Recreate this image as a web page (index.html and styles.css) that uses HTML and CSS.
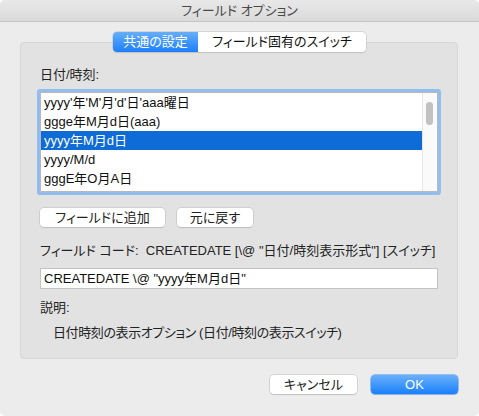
FILE: index.html
```html
<!DOCTYPE html>
<html lang="ja">
<head>
<meta charset="utf-8">
<title>フィールド オプション</title>
<link rel="stylesheet" href="styles.css">
</head>
<body>
<div class="window">
  <div class="titlebar">フィールド オプション</div>
  <div class="content">
    <div class="tabs">
      <div class="tab tab-active">共通の設定</div>
      <div class="tab tab-other">フィールド固有のスイッチ</div>
    </div>
    <div class="group">
      <div class="label">日付/時刻:</div>
      <div class="listbox">
        <div class="rows">
          <div class="row">yyyy'年'M'月'd'日'aaa曜日</div>
          <div class="row">ggge年M月d日(aaa)</div>
          <div class="row row-selected">yyyy年M月d日</div>
          <div class="row">yyyy/M/d</div>
          <div class="row">gggE年O月A日</div>
          <div class="row">yyyy年M月</div>
        </div>
        <div class="scrollbar"><div class="thumb"></div></div>
      </div>
      <div class="btn-row">
        <div class="btn btn-add">フィールドに追加</div>
        <div class="btn btn-reset">元に戻す</div>
      </div>
      <div class="codeline">フィールド コード:&nbsp;&nbsp;CREATEDATE [\@ "日付/時刻表示形式"] [スイッチ]</div>
      <div class="textfield">CREATEDATE \@ "yyyy年M月d日"</div>
      <div class="label desc-label">説明:</div>
      <div class="desc">日付時刻の表示オプション (日付/時刻の表示スイッチ)</div>
    </div>
    <div class="footer">
      <div class="btn btn-foot">キャンセル</div>
      <div class="btn btn-foot btn-ok">OK</div>
    </div>
  </div>
</div>
</body>
</html>
```

FILE: styles.css
```css
html, body {
  margin: 0;
  padding: 0;
  background: #ffffff;
}
body {
  width: 479px;
  height: 416px;
  overflow: hidden;
  font-family: "Liberation Sans", "Noto Sans CJK JP", sans-serif;
  font-size: 13px;
  font-feature-settings: "palt";
  color: #222222;
}
.window {
  width: 479px;
  height: 416px;
  background: #ececec;
  border-radius: 5px;
  overflow: hidden;
}
.titlebar {
  height: 21px;
  border-bottom: 1px solid #c6c6c6;
  background: linear-gradient(#e8e8e8, #dadada);
  text-align: center;
  line-height: 21px;
  font-size: 13px;
  color: #4a4a4a;
}
.content {
  padding: 10px 21px 0 20px;
  display: flex;
  flex-direction: column;
}
.tabs {
  align-self: center;
  display: flex;
  height: 20px;
  position: relative;
  z-index: 1;
  margin-left: 1px;
  border-radius: 4px;
  background: #ffffff;
  box-shadow: 0 0 0 0.5px #bdbdbd, 0 1px 1px rgba(0,0,0,0.12);
}
.tab {
  height: 20px;
  line-height: 20px;
  text-align: center;
  white-space: nowrap;
  color: #111111;
}
.tab-active {
  width: 85px;
  border-radius: 4px 0 0 4px;
  background: linear-gradient(#66aefa, #1c7ff9);
  color: #ffffff;
}
.tab-other {
  width: 168px;
}
.group {
  margin-top: -10px;
  border: 1px solid #d6d6d6;
  border-radius: 4px;
  background: #e2e2e2;
  padding: 24px 19px 17px 19px;
  display: flex;
  flex-direction: column;
}
.label {
  line-height: 16px;
  color: #222222;
}
.listbox {
  margin-top: 9px;
  height: 98px;
  border: 1px solid #b8b8b8;
  border-radius: 1px;
  box-shadow: 0 0 0 3px #93bcef;
  background: #ffffff;
  display: flex;
  overflow: hidden;
}
.rows {
  flex: 1;
  overflow: hidden;
}
.row {
  height: 19px;
  line-height: 19px;
  padding-left: 3px;
  white-space: nowrap;
  color: #111111;
}
.row-selected {
  background: #0f6bd5;
  color: #ffffff;
}
.scrollbar {
  width: 14px;
  border-left: 1px solid #e6e6e6;
  background: #fafafa;
  position: relative;
}
.thumb {
  position: absolute;
  left: 3px;
  top: 9px;
  width: 7px;
  height: 23px;
  border-radius: 4px;
  background: #c1c1c1;
}
.btn-row {
  margin-top: 16px;
  display: flex;
  gap: 12px;
}
.btn {
  height: 19px;
  line-height: 19px;
  text-align: center;
  background: #ffffff;
  border-radius: 4px;
  box-shadow: 0 0 0 0.5px #bcbcbc, 0 1px 1px rgba(0,0,0,0.15);
  color: #222222;
}
.btn-add {
  width: 125px;
}
.btn-reset {
  width: 76px;
}
.codeline {
  margin-top: 16px;
  line-height: 16px;
  white-space: nowrap;
}
.textfield {
  margin-top: 9px;
  height: 19px;
  line-height: 19px;
  border: 1px solid #c4c4c4;
  background: #ffffff;
  padding-left: 3px;
  color: #111111;
}
.desc-label {
  margin-top: 11px;
}
.desc {
  margin-top: 9px;
  padding-left: 13px;
  line-height: 16px;
  letter-spacing: -0.4px;
}
.footer {
  margin-top: 16px;
  display: flex;
  justify-content: flex-end;
  gap: 14px;
}
.btn-foot {
  width: 87px;
}
.btn-ok {
  background: linear-gradient(#69b0fb, #1a80fa);
  color: #ffffff;
  box-shadow: 0 0 0 0.5px #3d8ff0, 0 1px 1px rgba(0,0,0,0.12);
}
```
